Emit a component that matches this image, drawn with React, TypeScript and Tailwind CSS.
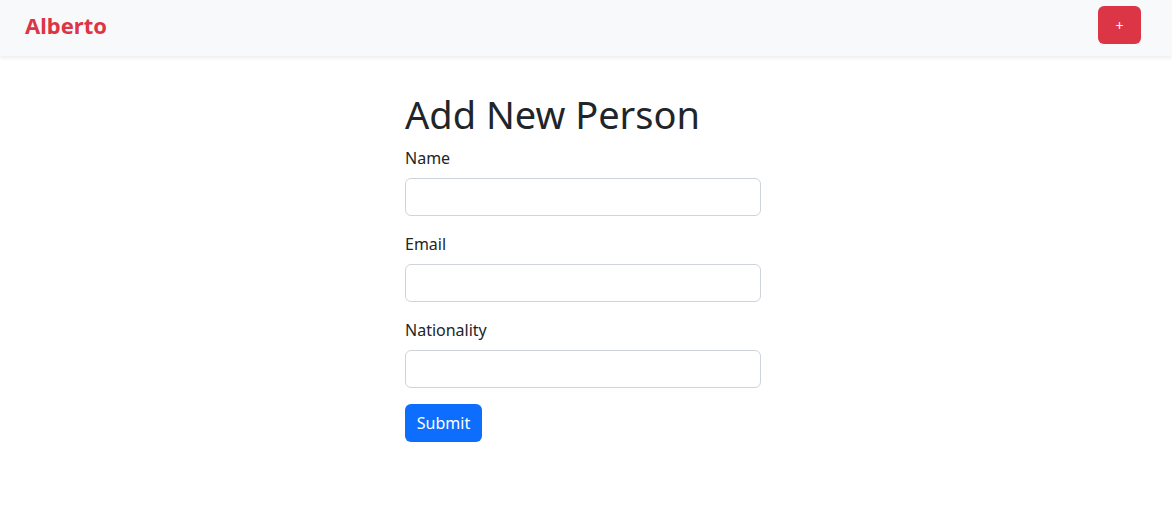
import React, { useState } from 'react';

const fields = [
  { id: 'name', label: 'Name', type: 'text' },
  { id: 'email', label: 'Email', type: 'email' },
  { id: 'nationality', label: 'Nationality', type: 'text' },
];

const App: React.FC = () => {
  const [values, setValues] = useState<Record<string, string>>({ name: '', email: '', nationality: '' });

  const handleSubmit = (e: React.FormEvent) => {
    e.preventDefault();
  };

  return (
    <div className="min-h-screen bg-white text-[#212529] font-['Noto_Sans',sans-serif]">
      <nav className="h-[56px] bg-[#f8f9fa] shadow-[0_2px_4px_rgba(0,0,0,0.075)] flex items-center justify-between pl-[25px] pr-[31px] pb-[6px]">
        <span className="text-[22px] font-bold text-[#dc3545] leading-none">Alberto</span>
        <button className="w-[43px] h-[38px] rounded-[6px] bg-[#dc3545] text-white text-[14px] flex items-center justify-center">
          +
        </button>
      </nav>

      <div className="w-[356px] ml-[405px] pt-[34px]">
        <h1 className="text-[38px] leading-[48px] font-normal mb-2">Add New Person</h1>
        <form onSubmit={handleSubmit}>
          {fields.map(f => (
            <div key={f.id} className="mb-4">
              <label htmlFor={f.id} className="block text-[16px] leading-6 mb-2">{f.label}</label>
              <input
                id={f.id}
                type={f.type}
                value={values[f.id]}
                onChange={e => setValues(prev => ({ ...prev, [f.id]: e.target.value }))}
                className="block w-full h-[38px] px-3 rounded-[6px] border border-[#ced4da] bg-white outline-none"
              />
            </div>
          ))}
          <button type="submit" className="h-[38px] w-[77px] rounded-[6px] bg-[#0d6efd] text-white text-[16px]">
            Submit
          </button>
        </form>
      </div>
    </div>
  );
};

export default App;
